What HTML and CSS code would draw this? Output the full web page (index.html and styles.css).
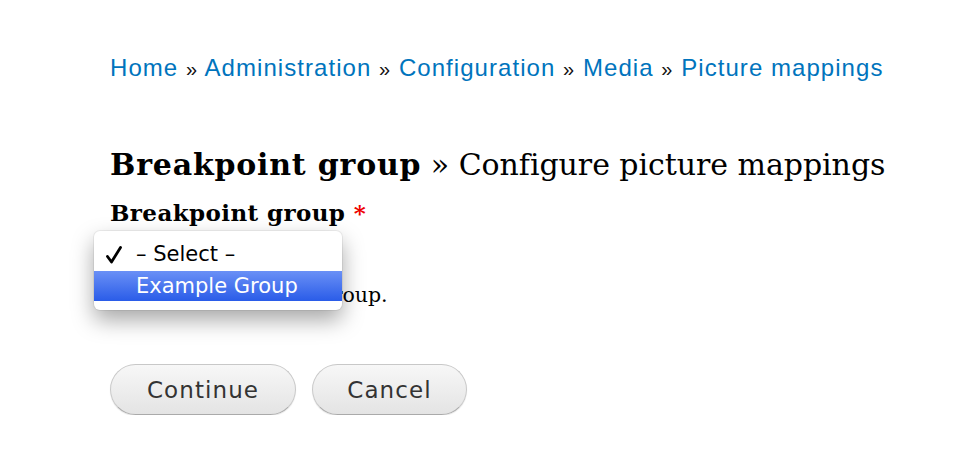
FILE: index.html
```html
<!DOCTYPE html>
<html>
<head>
<meta charset="utf-8">
<link rel="stylesheet" href="styles.css">
</head>
<body>
<div class="page">
  <nav class="breadcrumb">
    <a href="#">Home</a> <span class="sep">»</span> <a href="#">Administration</a> <span class="sep">»</span> <a href="#">Configuration</a> <span class="sep">»</span> <a href="#">Media</a> <span class="sep">»</span> <a href="#">Picture mappings</a>
  </nav>
  <h1 class="title"><strong>Breakpoint group</strong> » Configure picture mappings</h1>
  <div class="field">
    <label class="label">Breakpoint group <span class="req">*</span></label>
    <div class="select-wrap">
      <div class="select">– Select –</div>
      <div class="menu">
        <div class="opt checked"><svg class="check" width="18" height="18" viewBox="0 0 18 18"><path d="M2.5 10.5 L6.5 16 L15.5 1.5" fill="none" stroke="#000" stroke-width="2.8" stroke-linecap="round" stroke-linejoin="round"/></svg>– Select –</div>
        <div class="opt active">Example Group</div>
      </div>
    </div>
    <div class="desc">Select a breakpoint group.</div>
  </div>
  <div class="actions">
    <button class="btn btn-continue">Continue</button>
    <button class="btn btn-cancel">Cancel</button>
  </div>
</div>
</body>
</html>
```
FILE: styles.css
```css
* { box-sizing: border-box; }
body {
  margin: 0;
  background: #fff;
  font-family: "DejaVu Serif", Georgia, serif;
  color: #000;
}
.page {
  padding: 52px 0 0 110px;
}
.breadcrumb {
  font-family: "Liberation Sans", Helvetica, Arial, sans-serif;
  font-size: 24px;
  line-height: 32px;
  color: #222;
  letter-spacing: 1.05px;
}
.breadcrumb a {
  color: #0074bd;
  text-decoration: none;
}
.sep {
  font-size: 20px;
  color: #111;
}
.title {
  margin: 60px 0 0;
  font-size: 30px;
  line-height: 40px;
  font-weight: normal;
  letter-spacing: -0.05px;
}
.title strong { font-weight: bold; letter-spacing: 0.8px; }
.field { margin-top: 14px; }
.label {
  display: block;
  font-weight: bold;
  font-size: 23px;
  line-height: 28px;
  letter-spacing: 0.4px;
}
.req { color: #e00; }
.select-wrap {
  position: relative;
  height: 36px;
  margin-top: 6px;
}
.select {
  width: 230px;
  height: 30px;
  border: 1px solid #bbb;
  border-radius: 5px;
  font-family: "DejaVu Sans", sans-serif;
  font-size: 18px;
  padding: 3px 10px;
}
.menu {
  position: absolute;
  left: -16px;
  top: -2px;
  width: 248px;
  background: #fff;
  border-radius: 6px;
  box-shadow: 0 10px 22px rgba(0,0,0,0.35), 0 0 0 1px rgba(0,0,0,0.06);
  padding: 8px 0 9px;
  font-family: "DejaVu Sans", sans-serif;
  font-size: 21px;
}
.opt {
  height: 30px;
  line-height: 30px;
  padding-left: 42px;
  position: relative;
}
.check {
  position: absolute;
  left: 11px;
  top: 7px;
}
.opt.active {
  background: linear-gradient(#6a90f6, #2a5ce8);
  color: #fff;
  margin-top: 2px;
}
.desc {
  font-size: 20.5px;
  line-height: 26px;
  margin-top: 13px;
}
.actions {
  margin-top: 56px;
  display: flex;
  gap: 16px;
}
.btn {
  height: 51px;
  border-radius: 26px;
  border: 1px solid #c8c8c8;
  border-bottom-color: #aaa;
  background: linear-gradient(#f7f7f7, #e4e4e4);
  box-shadow: 0 1px 1px rgba(0,0,0,0.1);
  font-family: "DejaVu Sans", sans-serif;
  font-size: 23px;
  letter-spacing: 1.1px;
  color: #333;
  padding: 0;
}
.btn-continue { width: 186px; }
.btn-cancel { width: 155px; }
```
